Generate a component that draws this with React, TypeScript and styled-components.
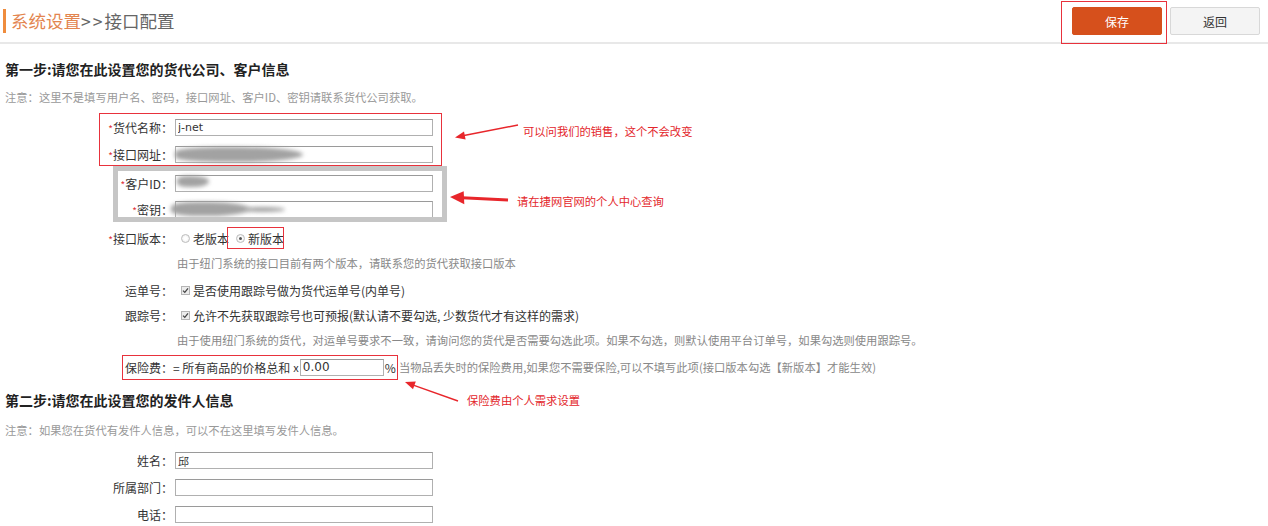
import React from "react";
import styled, { createGlobalStyle } from "styled-components";

const GlobalStyle = createGlobalStyle`
    body {
        margin: 0;
        background: #fff;
        font-family: "Noto Sans CJK SC", "Noto Sans", sans-serif;
        color: #333;
    }
`

const Page = styled.div`
    position: relative;
    width: 1268px;
    height: 526px;
    overflow: hidden;
`

const Header = styled.header`
    height: 42px;
    border-bottom: 2px solid #e8e8e8;
    display: flex;
    align-items: center;
    justify-content: space-between;
    padding: 0 8px 0 3px;
`

const Title = styled.h1`
    margin: 0;
    border-left: 3px solid #ef8c3d;
    padding-left: 5px;
    font-size: 17.5px;
    font-weight: 400;
    line-height: 24px;
    color: #666;
    span { color: #e3854f; }
    b { font-weight: 400; letter-spacing: 2px; }
`

const Actions = styled.div`
    display: flex;
    gap: 8px;
`

const Button = styled.button<{ $primary?: boolean }>`
    width: 90px;
    height: 28px;
    font-family: inherit;
    font-size: 12px;
    border-radius: 2px;
    border: 1px solid ${p => p.$primary ? "#d6501c" : "#d8d8d8"};
    background: ${p => p.$primary ? "#d6501c" : "#f4f4f4"};
    color: ${p => p.$primary ? "#fff" : "#333"};
`

const Heading = styled.h2<{ $mt: number }>`
    margin: ${p => p.$mt}px 0 0 5px;
    font-size: 14px;
    font-weight: 700;
    line-height: 20px;
    color: #222;
`

const Note = styled.p<{ $mt: number }>`
    margin: ${p => p.$mt}px 0 0 5px;
    font-size: 11.3px;
    line-height: 16px;
    color: #999;
`

const Form = styled.div<{ $mt: number }>`
    margin-top: ${p => p.$mt}px;
`

const Row = styled.div<{ $mt?: number; $h?: number }>`
    display: grid;
    grid-template-columns: 173px 1fr;
    column-gap: 2px;
    align-items: center;
    height: ${p => p.$h ?? 26}px;
    margin-top: ${p => p.$mt ?? 0}px;
`

const Label = styled.label`
    text-align: right;
    font-size: 12px;
    white-space: nowrap;
    color: #333;
    grid-column: 1;
`

const Req = styled.i`
    font-style: normal;
    color: #e0343a;
    font-size: 10px;
`

const Field = styled.div<{ $w?: number }>`
    position: relative;
    width: ${p => p.$w ?? 258}px;
    height: 17px;
    grid-column: 2;
`

const Input = styled.input<{ $w?: number; $fs?: number }>`
    display: block;
    box-sizing: border-box;
    width: ${p => p.$w ?? 258}px;
    height: 17px;
    margin: 0;
    border: 1px solid #b0b0b0;
    border-top-color: #9a9a9a;
    padding: 0 2px;
    font-family: "DejaVu Sans", "Noto Sans CJK SC", sans-serif;
    font-size: ${p => p.$fs ?? 11}px;
    color: #333;
    outline: none;
`

const Redact = styled.span<{ $w: number; $h: number; $x?: number; $y?: number }>`
    position: absolute;
    left: ${p => p.$x ?? 1}px;
    top: ${p => p.$y ?? 1}px;
    width: ${p => p.$w}px;
    height: ${p => p.$h}px;
    background: #a2a2a2;
    border-radius: 40% 60% 60% 40%;
    filter: blur(2px);
`

const Content = styled.div<{ $pl?: number; $ml?: number; $gap?: number }>`
    grid-column: 2;
    display: flex;
    align-items: center;
    gap: ${p => p.$gap ?? 3}px;
    margin-left: ${p => p.$ml ?? 0}px;
    padding-left: ${p => p.$pl ?? 0}px;
    font-size: 12px;
    color: #333;
    white-space: nowrap;
`

const Help = styled.div`
    grid-column: 2;
    padding-left: 2px;
    font-size: 11.3px;
    color: #888;
    white-space: nowrap;
`

const Choice = styled.span<{ $mr?: number }>`
    display: inline-flex;
    align-items: center;
    gap: 3px;
    margin-right: ${p => p.$mr ?? 0}px;
`

const Radio = styled.span<{ $on?: boolean }>`
    box-sizing: border-box;
    width: 9px;
    height: 9px;
    border-radius: 50%;
    border: 1px solid #bdbdbd;
    background: radial-gradient(circle, #fff 30%, #e6e6e6);
    display: inline-flex;
    align-items: center;
    justify-content: center;
    &::after {
        content: "";
        width: 3px;
        height: 3px;
        border-radius: 50%;
        background: ${p => p.$on ? "#555" : "transparent"};
    }
`

const Box = styled.span`
    box-sizing: border-box;
    width: 9px;
    height: 9px;
    border: 1px solid #b5b5b5;
    background: #ececec;
    display: inline-flex;
    align-items: center;
    justify-content: center;
`

const Times = styled.span`
    margin-left: 2px;
    font-size: 11px;
`

const Muted = styled.span`
    margin-left: 2px;
    font-size: 11.3px;
    color: #888;
`

const Overlay = styled.div`
    position: absolute;
    inset: 0;
    pointer-events: none;
`

const Mark = styled.div<{ $x: number; $y: number; $w: number; $h: number; $gray?: boolean }>`
    position: absolute;
    box-sizing: border-box;
    left: ${p => p.$x}px;
    top: ${p => p.$y}px;
    width: ${p => p.$w}px;
    height: ${p => p.$h}px;
    border: ${p => p.$gray ? "5px solid #c6c6c6" : "1px solid #e8323c"};
`

const Remark = styled.span<{ $x: number; $y: number }>`
    position: absolute;
    left: ${p => p.$x}px;
    top: ${p => p.$y}px;
    font-size: 11.3px;
    line-height: 16px;
    color: #e3262b;
    white-space: nowrap;
`

const Arrows = styled.svg`
    position: absolute;
    left: 0;
    top: 0;
`

function Check() {
    return (
        <svg width="7" height="7" viewBox="0 0 7 7">
            <path d="M1 3.6 L2.8 5.4 L6 1.4" fill="none" stroke="#444" strokeWidth="1.3" />
        </svg>
    )
}

export default function App() {
    return (
        <Page>
            <GlobalStyle />
            <Header>
                <Title><span>系统设置</span><b>&gt;&gt;</b>接口配置</Title>
                <Actions>
                    <Button $primary>保存</Button>
                    <Button>返回</Button>
                </Actions>
            </Header>

            <Heading $mt={15}>第一步:请您在此设置您的货代公司、客户信息</Heading>
            <Note $mt={10}>注意：这里不是填写用户名、密码，接口网址、客户ID、密钥请联系货代公司获取。</Note>

            <Form $mt={9}>
                <Row>
                    <Label><Req>*</Req>货代名称：</Label>
                    <Field><Input defaultValue="j-net" /></Field>
                </Row>
                <Row $mt={1}>
                    <Label><Req>*</Req>接口网址：</Label>
                    <Field><Input /><Redact $w={128} $h={15} $x={0} /></Field>
                </Row>
                <Row $mt={3}>
                    <Label><Req>*</Req>客户ID：</Label>
                    <Field><Input /><Redact $w={32} $h={11} $x={2} $y={1} /></Field>
                </Row>
                <Row>
                    <Label><Req>*</Req>密钥：</Label>
                    <Field>
                        <Input />
                        <Redact $w={78} $h={14} $x={-4} $y={1} />
                        <Redact $w={40} $h={5} $x={70} $y={6} />
                    </Field>
                </Row>
                <Row $mt={3}>
                    <Label><Req>*</Req>接口版本：</Label>
                    <Content $pl={6}>
                        <Choice $mr={4}><Radio />老版本</Choice>
                        <Choice><Radio $on />新版本</Choice>
                    </Content>
                </Row>
                <Row $mt={-1}>
                    <Help>由于纽门系统的接口目前有两个版本，请联系您的货代获取接口版本</Help>
                </Row>
                <Row $mt={1}>
                    <Label>运单号：</Label>
                    <Content $pl={6}>
                        <Choice><Box><Check /></Box>是否使用跟踪号做为货代运单号(内单号)</Choice>
                    </Content>
                </Row>
                <Row $mt={-1}>
                    <Label>跟踪号：</Label>
                    <Content $pl={6}>
                        <Choice><Box><Check /></Box>允许不先获取跟踪号也可预报(默认请不要勾选, 少数货代才有这样的需求)</Choice>
                    </Content>
                </Row>
                <Row $mt={-1}>
                    <Help>由于使用纽门系统的货代，对运单号要求不一致，请询问您的货代是否需要勾选此项。如果不勾选，则默认使用平台订单号，如果勾选则使用跟踪号。</Help>
                </Row>
                <Row $mt={1}>
                    <Label>保险费：</Label>
                    <Content $ml={-2} $gap={1}>
                        = 所有商品的价格总和<Times>x</Times>
                        <Input $w={84} $fs={12} defaultValue="0.00" />
                        <span>%</span>
                        <Muted>当物品丢失时的保险费用,如果您不需要保险,可以不填写此项(接口版本勾选【新版本】才能生效)</Muted>
                    </Content>
                </Row>
            </Form>

            <Heading $mt={10}>第二步:请您在此设置您的发件人信息</Heading>
            <Note $mt={12}>注意：如果您在货代有发件人信息，可以不在这里填写发件人信息。</Note>

            <Form $mt={9}>
                <Row $h={27}>
                    <Label>姓名：</Label>
                    <Field><Input defaultValue="邱" /></Field>
                </Row>
                <Row $h={27}>
                    <Label>所属部门：</Label>
                    <Field><Input /></Field>
                </Row>
                <Row $h={27}>
                    <Label>电话：</Label>
                    <Field><Input /></Field>
                </Row>
            </Form>

            <Overlay>
                <Mark $x={1061} $y={1} $w={106} $h={43} />
                <Mark $x={99} $y={113} $w={343} $h={53} />
                <Mark $x={113} $y={166} $w={334} $h={56} $gray />
                <Mark $x={227} $y={227} $w={57} $h={22} />
                <Mark $x={122} $y={355} $w={276} $h={25} />
                <Arrows width="1268" height="526" viewBox="0 0 1268 526">
                    <g fill="#e8262b" stroke="#e8262b">
                        <line x1="518" y1="125" x2="464" y2="135.5" strokeWidth="1.4" />
                        <polygon points="455,137.5 464,131.6 465.6,139.4" stroke="none" />
                        <line x1="508" y1="200" x2="462" y2="197.7" strokeWidth="3" />
                        <polygon points="450,197 463.7,191.2 464.3,204.2" stroke="none" />
                        <line x1="458" y1="401" x2="414" y2="385.4" strokeWidth="1.4" />
                        <polygon points="405,382 415.8,381.6 413,389.2" stroke="none" />
                    </g>
                </Arrows>
                <Remark $x={523} $y={123}>可以问我们的销售，这个不会改变</Remark>
                <Remark $x={517} $y={193}>请在捷网官网的个人中心查询</Remark>
                <Remark $x={467} $y={392}>保险费由个人需求设置</Remark>
            </Overlay>
        </Page>
    )
}
